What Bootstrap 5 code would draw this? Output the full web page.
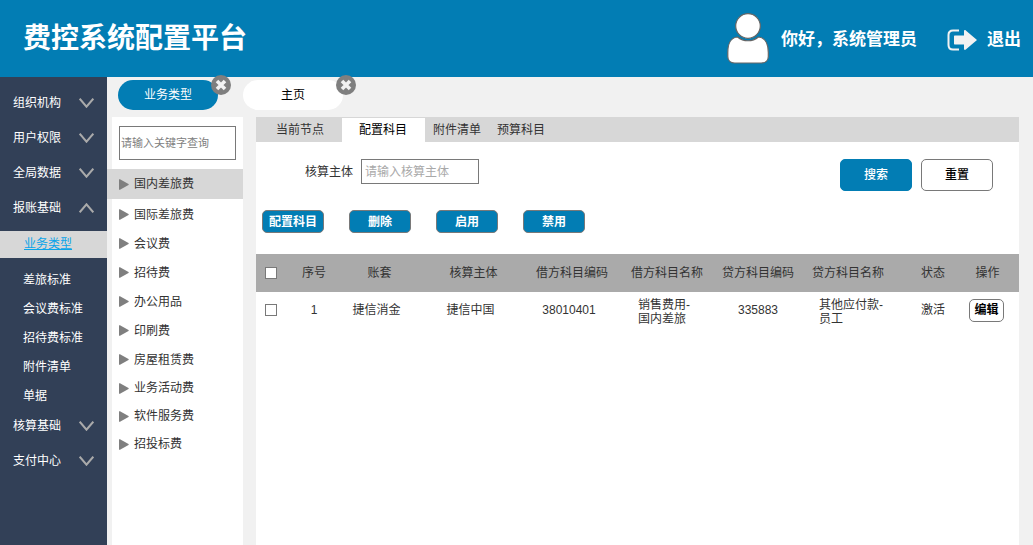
<!DOCTYPE html>
<html lang="zh-CN">
<head>
<meta charset="utf-8">
<meta name="viewport" content="width=device-width, initial-scale=1">
<title>费控系统配置平台</title>
<link rel="stylesheet" href="https://cdn.jsdelivr.net/npm/bootstrap@5.3.0/dist/css/bootstrap.min.css">
<style>
  :root { --brand: #027db4; --line: #797979; --bar: #d7d7d7; }
  body { font-family: "Liberation Sans", "Noto Sans CJK SC", sans-serif; font-size: 12px; line-height: 18px; color: #333; background: #f1f1f1; }
  a { color: inherit; text-decoration: none; }
  svg { flex: none; display: block; }
  .topbar { background: var(--brand); min-height: 77px; padding: 0 12px 0 23px; color: #fff; }
  .topbar h1 { font-size: 28px; line-height: 36px; font-weight: 700; }
  .topbar .who, .topbar .exit { font-size: 17px; line-height: 24px; font-weight: 700; padding-top: 3px; }
  .topbar .exit { margin-left: 30px; gap: 10px; }
  .side { flex: 0 0 107px; background: #324057; color: #fff; padding-top: 8px; }
  .side-item { display: flex; width: 100%; height: 35px; align-items: center; justify-content: space-between; padding: 0 13px; border: 0; background: none; color: #fff; }
  .side-current { display: block; margin: 6px 0 5px; height: 27px; padding: 4px 24px; background: var(--bar); color: #0ba4e8; text-decoration: underline; }
  .side-sub { display: flex; height: 29px; padding: 4px 0 0 23px; align-items: center; }
  .main-col { min-width: 0; }
  .pages { height: 40px; padding: 3px 0 0 11px; gap: 25px; }
  .page-pill { width: 100px; height: 30px; border-radius: 15px; background: #fff; color: #000; }
  .page-pill.current { background: var(--brand); color: #fff; }
  .page-pill .shut { top: -5px; right: -13px; border: 0; background: none; padding: 0; }
  .tree { flex: 0 0 136px; background: linear-gradient(90deg, #f1f1f1 5px, #fff 5px); }
  .tree input { width: 117px; height: 34px; margin: 9px 0 9px 12px; padding: 0 1px; font-size: 11px; border: 1px solid var(--line); }
  .tree input::placeholder { color: #808080; }
  .tree li a { display: flex; align-items: center; height: 29px; padding-left: 12px; gap: 5px; }
  .tree li:first-child a { height: 30px; background: var(--bar); margin-bottom: 1px; }
  .tree li:nth-child(n+8) a { height: 28px; }
  .work { margin: 0 14px 0 13px; background: #fff; min-width: 0; }
  .tabs { background: var(--bar); height: 25px; padding-top: 1px; }
  .tabs a { display: flex; align-items: center; height: 24px; }
  .tabs .lead-tab { padding: 0 18px 0 20px; }
  .tabs .on { background: #fff; color: #000; padding: 0 18px 0 17px; }
  .filter { padding: 17px 26px 0 49px; }
  .filter input { width: 118px; height: 25px; padding: 0 3px; border: 1px solid var(--line); }
  .filter input::placeholder { color: #a9a9a9; }
  .btn { --bs-btn-font-size: 12px; --bs-btn-line-height: 18px; --bs-btn-padding-x: 0; --bs-btn-padding-y: 0; --bs-btn-border-radius: 5px; --bs-btn-border-color: var(--line); }
  .btn-brand { --bs-btn-bg: var(--brand); --bs-btn-color: #fff; --bs-btn-hover-bg: #026a99; --bs-btn-hover-color: #fff; }
  .btn-plain { --bs-btn-bg: #fff; --bs-btn-color: #000; }
  .btn-wide { width: 72px; height: 32px; font-weight: 500; }
  .btn-wide.btn-brand { --bs-btn-border-color: var(--brand); }
  .pair { gap: 9px; }
  .btn-act { width: 62px; height: 23px; font-weight: 700; }
  .btn-edit { width: 35px; height: 23px; font-weight: 700; }
  .acts { padding: 19px 6px 21px; gap: 25px; }
  .grid { width: 100%; table-layout: fixed; text-align: center; }
  .grid th { height: 38px; background: #aaa; font-weight: 400; white-space: nowrap; padding: 0; }
  .grid td { height: 36px; padding: 0; }
  .grid td.shift { padding-right: 6px; }
  .grid .end { padding-right: 10px; }
  .grid td.end { padding-right: 12px; }
  .grid .acct { display: block; width: 58px; margin: 4px auto 0; text-align: left; line-height: 14px; white-space: nowrap; }
  .grid input { appearance: none; display: block; width: 12px; height: 12px; margin: 0 0 0 9px; border: 1px solid var(--line); background: #fff; }
  .grid input:checked { background: var(--brand); }
</style>
</head>
<body>
<div class="d-flex flex-column min-vh-100">
  <header class="topbar d-flex align-items-center justify-content-between">
    <h1 class="m-0">费控系统配置平台</h1>
    <div class="d-flex align-items-center">
      <svg width="42" height="52" viewBox="0 0 42 52" fill="#fff" stroke="#666" stroke-width="1.2"><circle cx="21" cy="13" r="12.300"/><path d="M10.500 24C3 24.500 .8 32.500 .8 39.500v4c0 4 3 6.500 7 6.500h26.500c4 0 7-2.500 7-6.500v-4c0-7-2.300-15-9.800-15.500-6 5-15 5-21 0z"/></svg>
      <span class="who ms-2 ps-1">你好，系统管理员</span>
      <a class="exit d-flex align-items-center" href="#">
        <svg width="30" height="22" viewBox="0 0 30 22"><path d="M12 1.500H6C3 1.500 1.500 3 1.500 6v10c0 3 1.500 4.500 4.500 4.500h6" fill="none" stroke="#f2f2f2" stroke-width="2"/><path d="M8 6.500h9V2.200c0-1.200 1-1.500 1.800-.8L30 11 18.800 20.600c-.8.700-1.800.4-1.800-.8V15.500H8c-.7 0-1-.3-1-1v-7c0-.7.3-1 1-1z" fill="#f2f2f2"/></svg>
        退出
      </a>
    </div>
  </header>

  <svg width="0" height="0" class="position-absolute" aria-hidden="true">
    <symbol id="down" viewBox="0 0 15 10"><path d="M.7.700l6.800 8 6.800-8" fill="none" stroke="#aaa" stroke-width="2"/></symbol>
    <symbol id="up" viewBox="0 0 15 10"><path d="M.7 9.300l6.800-8 6.800 8" fill="none" stroke="#aaa" stroke-width="2"/></symbol>
    <symbol id="tri" viewBox="0 0 10 11"><path d="M0 0.500Q0 0 1 .300L9.500 5Q10 5.500 9.500 6L1 10.700Q0 11 0 10.500z" fill="#7f7f7f"/></symbol>
    <symbol id="cross" viewBox="0 0 20 20"><circle cx="10" cy="10" r="10" fill="#7f7f7f"/><path d="M6 6l8 8M14 6l-8 8" stroke="#f2f2f2" stroke-width="3.600"/></symbol>
  </svg>

  <div class="d-flex flex-grow-1">
    <nav class="side">
      <button class="side-item" type="button">组织机构<svg width="15" height="10"><use href="#down"/></svg></button>
      <button class="side-item" type="button">用户权限<svg width="15" height="10"><use href="#down"/></svg></button>
      <button class="side-item" type="button">全局数据<svg width="15" height="10"><use href="#down"/></svg></button>
      <button class="side-item" type="button">报账基础<svg width="15" height="10"><use href="#up"/></svg></button>
      <a class="side-current" href="#">业务类型</a>
      <a class="side-sub" href="#">差旅标准</a>
      <a class="side-sub" href="#">会议费标准</a>
      <a class="side-sub" href="#">招待费标准</a>
      <a class="side-sub" href="#">附件清单</a>
      <a class="side-sub" href="#">单据</a>
      <button class="side-item" type="button">核算基础<svg width="15" height="10"><use href="#down"/></svg></button>
      <button class="side-item" type="button">支付中心<svg width="15" height="10"><use href="#down"/></svg></button>
    </nav>

    <div class="main-col d-flex flex-column flex-grow-1">
      <div class="pages d-flex">
        <div class="page-pill current position-relative d-flex align-items-center justify-content-center">
          <a href="#">业务类型</a>
          <button class="shut position-absolute" type="button" aria-label="关闭"><svg width="20" height="20"><use href="#cross"/></svg></button>
        </div>
        <div class="page-pill position-relative d-flex align-items-center justify-content-center">
          <a href="#">主页</a>
          <button class="shut position-absolute" type="button" aria-label="关闭"><svg width="20" height="20"><use href="#cross"/></svg></button>
        </div>
      </div>

      <div class="d-flex flex-grow-1">
        <aside class="tree">
          <input class="d-block" type="text" placeholder="请输入关键字查询" aria-label="请输入关键字查询">
          <ul class="list-unstyled m-0">
            <li><a href="#"><svg width="10" height="11"><use href="#tri"/></svg>国内差旅费</a></li>
            <li><a href="#"><svg width="10" height="11"><use href="#tri"/></svg>国际差旅费</a></li>
            <li><a href="#"><svg width="10" height="11"><use href="#tri"/></svg>会议费</a></li>
            <li><a href="#"><svg width="10" height="11"><use href="#tri"/></svg>招待费</a></li>
            <li><a href="#"><svg width="10" height="11"><use href="#tri"/></svg>办公用品</a></li>
            <li><a href="#"><svg width="10" height="11"><use href="#tri"/></svg>印刷费</a></li>
            <li><a href="#"><svg width="10" height="11"><use href="#tri"/></svg>房屋租赁费</a></li>
            <li><a href="#"><svg width="10" height="11"><use href="#tri"/></svg>业务活动费</a></li>
            <li><a href="#"><svg width="10" height="11"><use href="#tri"/></svg>软件服务费</a></li>
            <li><a href="#"><svg width="10" height="11"><use href="#tri"/></svg>招投标费</a></li>
          </ul>
        </aside>

        <main class="work flex-grow-1">
          <nav class="tabs d-flex">
            <a class="lead-tab" href="#">当前节点</a>
            <a class="on" href="#" aria-current="page">配置科目</a>
            <a class="px-2" href="#">附件清单</a>
            <a class="px-2" href="#">预算科目</a>
          </nav>
          <form class="filter d-flex align-items-start gap-2">
            <label class="pt-1" for="subject">核算主体</label>
            <input id="subject" type="text" placeholder="请输入核算主体">
            <div class="pair d-flex ms-auto">
              <button class="btn btn-brand btn-wide" type="button">搜索</button>
              <button class="btn btn-plain btn-wide" type="reset">重置</button>
            </div>
          </form>
          <div class="acts d-flex">
            <button class="btn btn-brand btn-act" type="button">配置科目</button>
            <button class="btn btn-brand btn-act" type="button">删除</button>
            <button class="btn btn-brand btn-act" type="button">启用</button>
            <button class="btn btn-brand btn-act" type="button">禁用</button>
          </div>
          <table class="grid">
            <colgroup>
              <col style="width:30px"><col style="width:56px"><col style="width:75px"><col style="width:113px"><col style="width:84px">
              <col style="width:106px"><col style="width:76px"><col style="width:104px"><col style="width:66px"><col style="width:53px">
            </colgroup>
            <thead>
              <tr><th><input type="checkbox" aria-label="全选"></th><th>序号</th><th>账套</th><th>核算主体</th><th>借方科目编码</th><th>借方科目名称</th><th>贷方科目编码</th><th>贷方科目名称</th><th>状态</th><th class="end">操作</th></tr>
            </thead>
            <tbody>
              <tr>
                <td><input type="checkbox" aria-label="选择第1行"></td><td>1</td><td class="shift">捷信消金</td><td class="shift">捷信中国</td><td class="shift">38010401</td>
                <td><span class="acct">销售费用-<br>国内差旅</span></td><td>335883</td><td><span class="acct">其他应付款-<br>员工</span></td><td>激活</td>
                <td class="end"><button class="btn btn-plain btn-edit" type="button">编辑</button></td>
              </tr>
            </tbody>
          </table>
        </main>
      </div>
    </div>
  </div>
</div>
<script src="https://cdn.jsdelivr.net/npm/bootstrap@5.3.0/dist/js/bootstrap.bundle.min.js"></script>
</body>
</html>
